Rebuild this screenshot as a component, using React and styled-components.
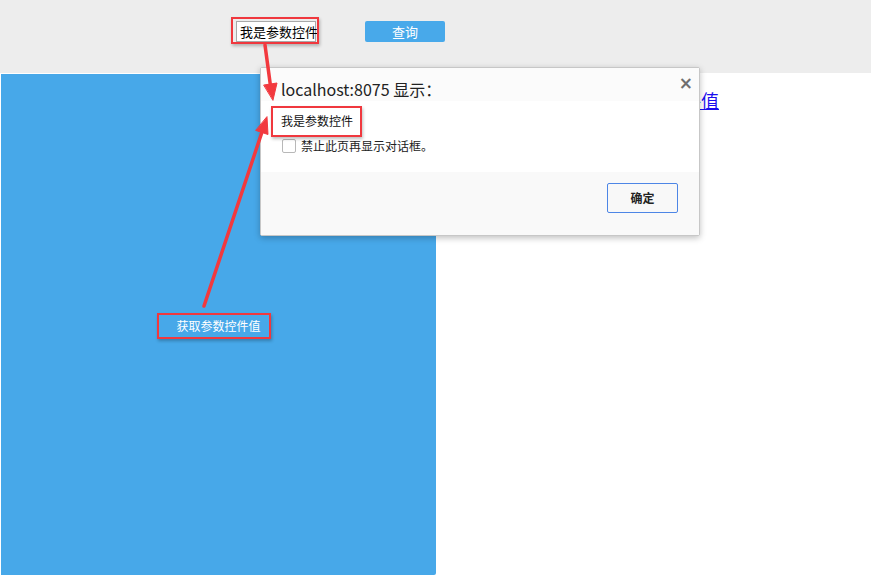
import React from "react";
import styled, { createGlobalStyle } from "styled-components";

const Global = createGlobalStyle`
  html, body { margin: 0; padding: 0; background: #fff; }
  body { font-family: "Noto Sans CJK SC", "Noto Sans", sans-serif; }
  #root { width: 871px; height: 576px; overflow: hidden; position: relative; }
`;

const Page = styled.div`
  position: relative;
  width: 871px;
  height: 576px;
  display: flex;
  flex-direction: column;
`;

const Header = styled.div`
  height: 73px;
  background: #ededed;
  display: flex;
  align-items: flex-start;
  padding: 21px 0 0 236px;
  box-sizing: border-box;
  gap: 49px;
`;

const Annotated = styled.span`
  position: relative;
  display: inline-flex;
  &::after {
    content: "";
    position: absolute;
    top: ${(p) => p.$t}px;
    left: ${(p) => p.$l}px;
    right: ${(p) => p.$r}px;
    bottom: ${(p) => p.$b}px;
    border: 2px solid #f0383e;
    box-shadow: 1px 2px 3px rgba(0, 0, 0, 0.25);
    pointer-events: none;
  }
`;

const ParamInput = styled.div`
  width: 80px;
  height: 21px;
  box-sizing: border-box;
  border: 1px solid #a9a9a9;
  background: #fff;
  font-size: 13px;
  line-height: 19px;
  color: #000;
  padding-left: 3px;
  white-space: nowrap;
`;

const QueryButton = styled.div`
  width: 80px;
  height: 21px;
  background: #48a9ea;
  border-radius: 2px;
  color: #fff;
  font-size: 13px;
  line-height: 21px;
  text-align: center;
`;

const Body = styled.div`
  flex: 1;
  display: flex;
  padding: 1px 0 1px 1px;
`;

const BluePanel = styled.div`
  width: 435px;
  background: #47a8e9;
  border-radius: 0 0 2px 0;
  display: flex;
  align-items: center;
  justify-content: center;
  padding-top: 2px;
  box-sizing: border-box;
`;

const PanelText = styled.span`
  color: #fff;
  font-size: 12px;
  line-height: 16px;
`;

const RightArea = styled.div`
  flex: 1;
  padding: 15px 0 0 157px;
`;

const Link = styled.a`
  font-size: 18px;
  line-height: 22px;
  color: #1a0dee;
  text-decoration: underline;
  cursor: pointer;
  white-space: nowrap;
`;

const Dialog = styled.div`
  position: absolute;
  left: 260px;
  top: 67px;
  width: 440px;
  height: 169px;
  box-sizing: border-box;
  border: 1px solid #c7c7c7;
  border-radius: 2px;
  background: #fff;
  box-shadow: 0 2px 6px rgba(0, 0, 0, 0.25);
  display: flex;
  flex-direction: column;
`;

const DialogHead = styled.div`
  position: relative;
  height: 33px;
  background: #fbfbfb;
  padding: 10px 0 0 20px;
  box-sizing: border-box;
  font-size: 16px;
  line-height: 22px;
  color: #222;
`;

const Close = styled.span`
  position: absolute;
  right: 6px;
  top: 4px;
  font-size: 17px;
  font-weight: bold;
  color: #6f6f6f;
  font-family: "DejaVu Sans", sans-serif;
`;

const DialogBody = styled.div`
  height: 71px;
  background: #fff;
  padding: 12px 0 0 20px;
  box-sizing: border-box;
  display: flex;
  flex-direction: column;
  gap: 9px;
`;

const Message = styled.div`
  font-size: 12px;
  line-height: 16px;
  color: #111;
`;

const CheckRow = styled.label`
  display: flex;
  align-items: center;
  gap: 5px;
  padding-left: 1px;
  font-size: 12px;
  line-height: 16px;
  color: #222;
`;

const Box = styled.span`
  width: 12px;
  height: 12px;
  border: 1px solid #b8b8b8;
  border-radius: 2px;
  background: #fff;
`;

const DialogFoot = styled.div`
  flex: 1;
  background: #f9f9f9;
  display: flex;
  justify-content: flex-end;
  align-items: flex-start;
  padding: 11px 21px 0 0;
`;

const OkButton = styled.div`
  width: 71px;
  height: 30px;
  box-sizing: border-box;
  border: 1px solid #4d86e6;
  border-radius: 2px;
  background: #f8f8f8;
  font-size: 12px;
  font-weight: bold;
  line-height: 28px;
  text-align: center;
  color: #222;
`;

const Overlay = styled.svg`
  position: absolute;
  left: 0;
  top: 0;
  pointer-events: none;
`;

export default function App() {
  return (
    <>
      <Global />
      <Page>
        <Header>
          <Annotated $t={-4} $l={-5} $r={-3} $b={-2}>
            <ParamInput>我是参数控件</ParamInput>
          </Annotated>
          <QueryButton>查询</QueryButton>
        </Header>
        <Body>
          <BluePanel>
            <Annotated $t={-5} $l={-19} $r={-10} $b={-5}>
              <PanelText>获取参数控件值</PanelText>
            </Annotated>
          </BluePanel>
          <RightArea>
            <Link>获取参数控件值</Link>
          </RightArea>
        </Body>

        <Dialog>
          <DialogHead>
            localhost:8075 显示：
            <Close>×</Close>
          </DialogHead>
          <DialogBody>
            <Annotated $t={-7} $l={-10} $r={-9} $b={-8} style={{ alignSelf: "flex-start" }}>
              <Message>我是参数控件</Message>
            </Annotated>
            <CheckRow>
              <Box />
              禁止此页再显示对话框。
            </CheckRow>
          </DialogBody>
          <DialogFoot>
            <OkButton>确定</OkButton>
          </DialogFoot>
        </Dialog>

        <Overlay width="871" height="576" viewBox="0 0 871 576">
          <g fill="#f2393e" stroke="#f2393e" strokeLinecap="round" strokeLinejoin="round">
            <line x1="265" y1="45" x2="270.5" y2="86" strokeWidth="3.5" />
            <polygon points="273,100 277,83 264,85" strokeWidth="1" />
            <line x1="204" y1="306" x2="262" y2="132" strokeWidth="3.5" />
            <polygon points="267,117 268,134.5 256,130.5" strokeWidth="1" />
          </g>
        </Overlay>
      </Page>
    </>
  );
}
